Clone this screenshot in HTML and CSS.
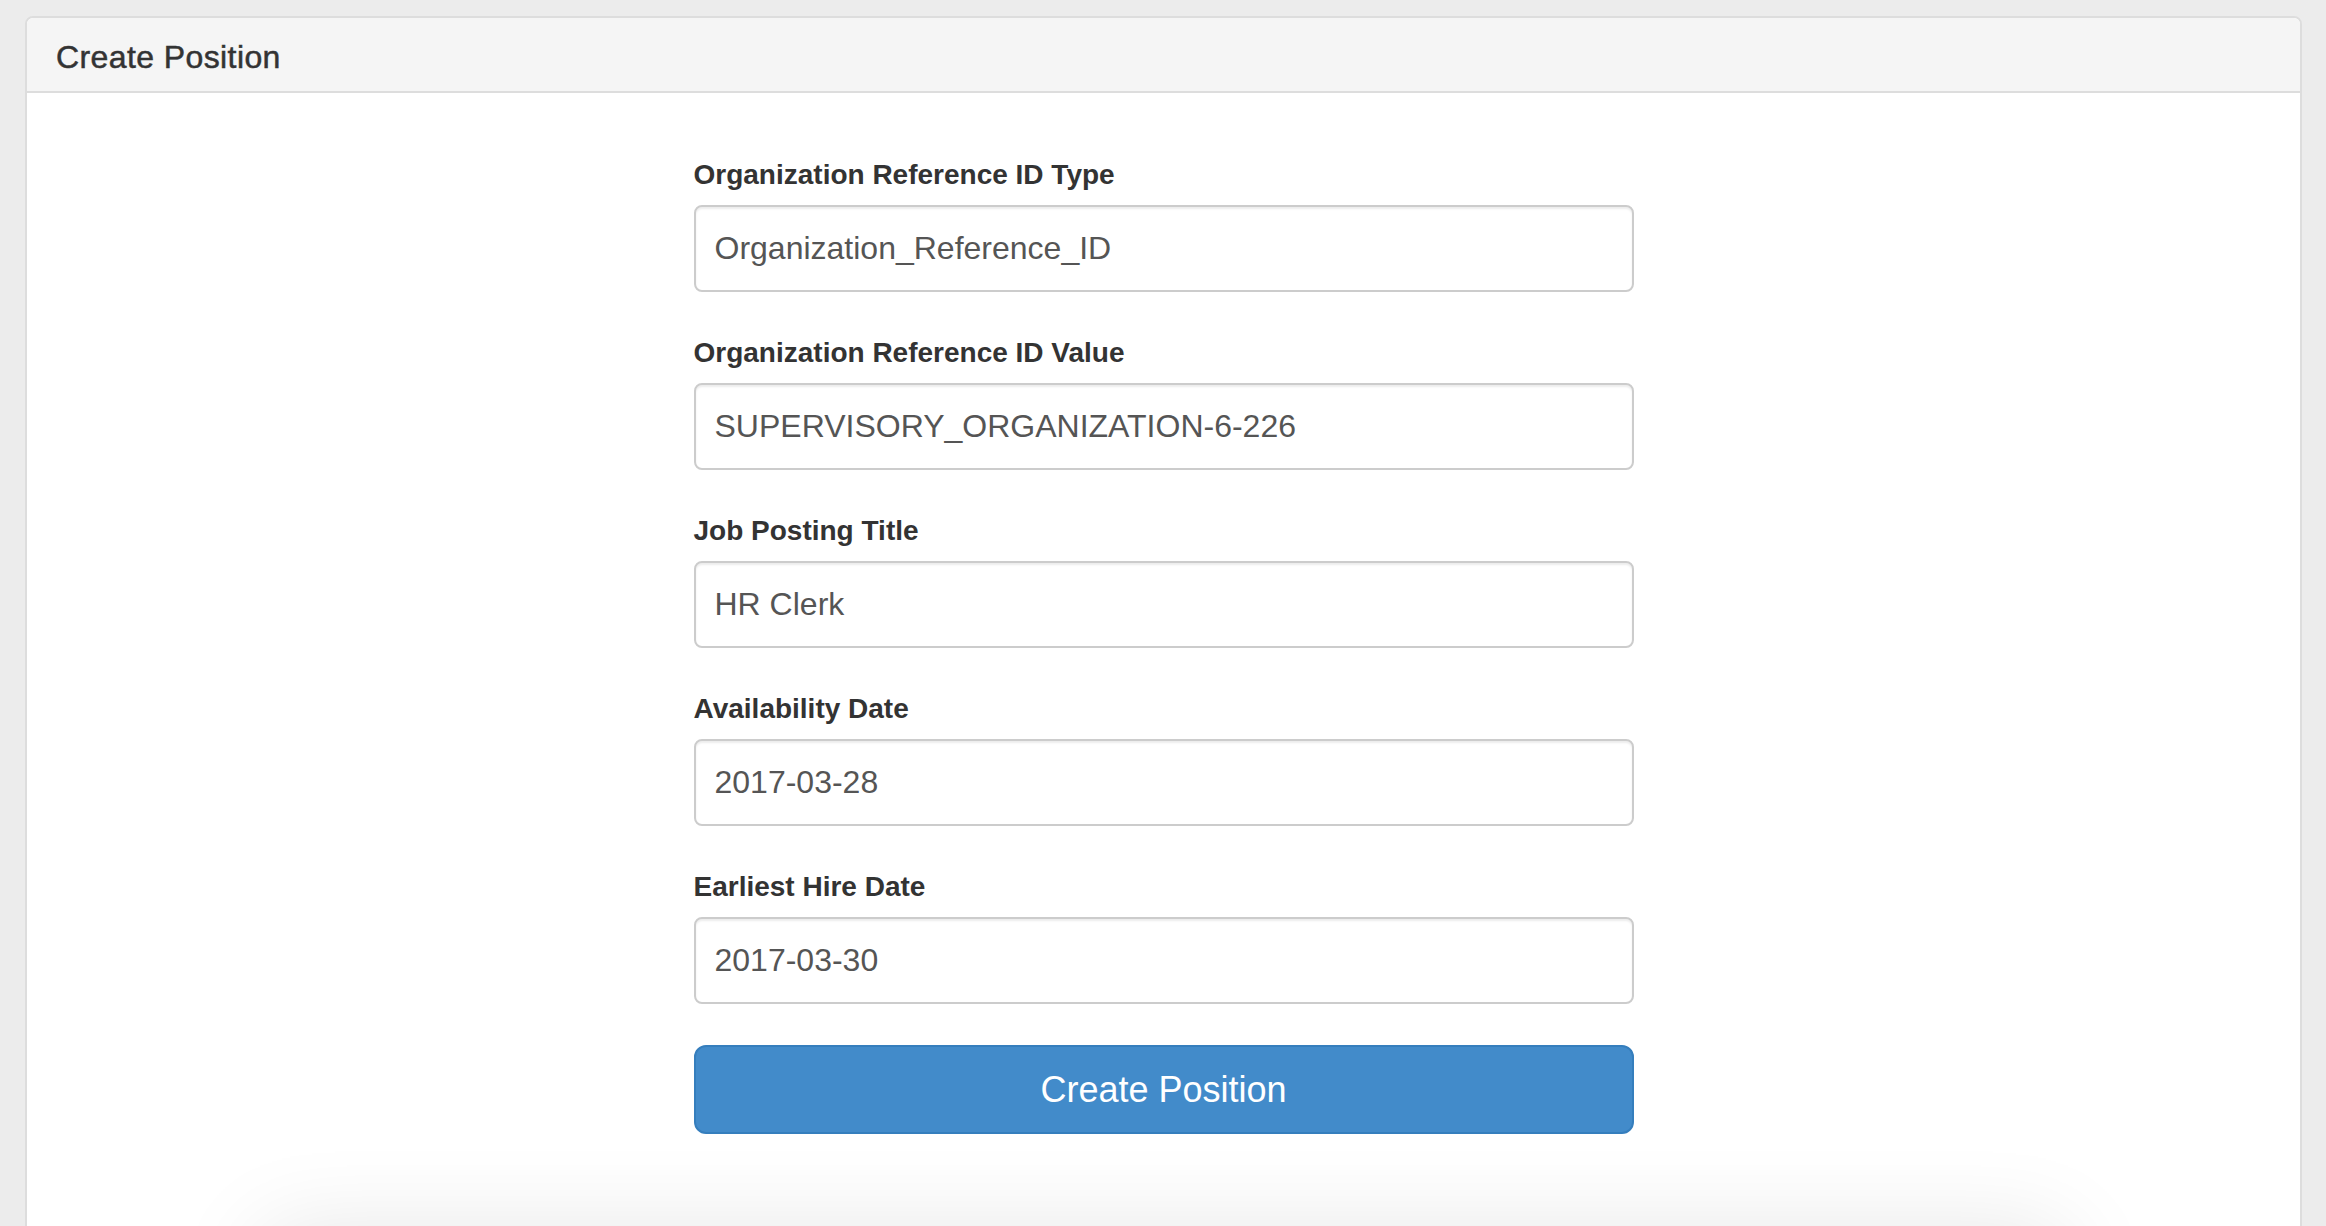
FILE: index.html
```html
<!DOCTYPE html>
<html lang="en">
<head>
<meta charset="utf-8">
<title>Create Position</title>
<link rel="stylesheet" href="styles.css">
</head>
<body>
<div class="panel">
  <div class="panel-heading">
    <h3 class="panel-title">Create Position</h3>
  </div>
  <div class="panel-body">
    <form class="form">
      <div class="form-group">
        <label class="form-label">Organization Reference ID Type</label>
        <input class="form-control" type="text" value="Organization_Reference_ID">
      </div>
      <div class="form-group">
        <label class="form-label">Organization Reference ID Value</label>
        <input class="form-control" type="text" value="SUPERVISORY_ORGANIZATION-6-226">
      </div>
      <div class="form-group">
        <label class="form-label">Job Posting Title</label>
        <input class="form-control" type="text" value="HR Clerk">
      </div>
      <div class="form-group">
        <label class="form-label">Availability Date</label>
        <input class="form-control" type="text" value="2017-03-28">
      </div>
      <div class="form-group">
        <label class="form-label">Earliest Hire Date</label>
        <input class="form-control" type="text" value="2017-03-30">
      </div>
      <button class="btn-primary" type="button">Create Position</button>
    </form>
    <div class="shade"></div>
  </div>
</div>
</body>
</html>
```

FILE: styles.css
```css
html, body {
  margin: 0;
  padding: 0;
  overflow: hidden;
}

body {
  background: #ececec;
  font-family: "Liberation Sans", Helvetica, Arial, sans-serif;
  color: #333;
}

.panel {
  margin: 16px 24px 0 25px;
  background: #fff;
  border: 2px solid #dddddd;
  border-radius: 8px 8px 0 0;
}

.panel-heading {
  background: #f5f5f5;
  border-bottom: 2px solid #dddddd;
  border-radius: 6px 6px 0 0;
  padding: 22px 30px 16px 29px;
}

.panel-title {
  margin: 0;
  font-size: 32px;
  line-height: 35px;
  font-weight: normal;
  letter-spacing: 0.4px;
  color: #333;
  -webkit-text-stroke: 0.5px #333;
}

.panel-body {
  padding-top: 62px;
}

.form {
  width: 940px;
  margin: 0 auto;
}

.form-group {
  display: flex;
  flex-direction: column;
  margin-bottom: 41px;
}

.form-label {
  font-size: 28px;
  font-weight: bold;
  line-height: 40px;
  margin-bottom: 10px;
  color: #333;
}

.form-control {
  box-sizing: border-box;
  height: 87px;
  width: 100%;
  margin: 0;
  padding: 0 19px;
  font-family: "Liberation Sans", Helvetica, Arial, sans-serif;
  font-size: 32px;
  color: #555;
  background: #fff;
  border: 2px solid #cccccc;
  border-radius: 8px;
  box-shadow: inset 0 2px 2px rgba(0, 0, 0, 0.075);
  outline: none;
}

.btn-primary {
  display: block;
  box-sizing: border-box;
  width: 100%;
  height: 89px;
  margin: 0;
  padding: 0;
  font-family: "Liberation Sans", Helvetica, Arial, sans-serif;
  font-size: 36px;
  color: #fff;
  background: #428bca;
  border: 2px solid #357ebd;
  border-radius: 12px;
  cursor: pointer;
}

.shade {
  width: 1800px;
  height: 300px;
  margin: 100px auto 0;
  background: #fff;
  box-shadow: 0 0 90px rgba(0, 0, 0, 0.11);
}
```
